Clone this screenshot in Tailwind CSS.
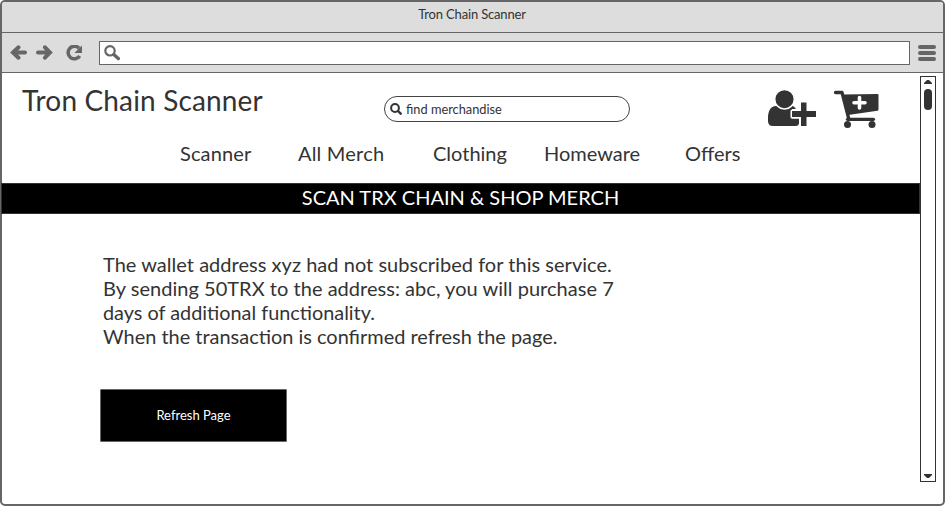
<!DOCTYPE html>
<html lang="en">
<head>
<meta charset="utf-8">
<title>Tron Chain Scanner</title>
<script src="https://cdn.jsdelivr.net/npm/@tailwindcss/browser@4"></script>
</head>
<body class="bg-white font-['Lato',sans-serif] text-[#333]">
<div class="flex h-[506px] w-[945px] flex-col rounded-[5px] border-2 border-[#666] bg-white">
  <div class="flex h-[31px] shrink-0 justify-center rounded-t-[3px] border-b border-[#666] bg-[#ddd] pr-px pt-[3px] text-[13px] leading-[18px] tracking-[-0.17px]">Tron Chain Scanner</div>
  <div class="flex h-10 shrink-0 items-start border-b border-[#666] bg-[#ddd] pt-2 text-[#666]">
    <svg class="ml-2 mt-1 h-4 w-[76px]" viewBox="0 0 76 16" fill="none" stroke="currentColor">
      <path d="M8.500 2.300 3 7.500 8.500 12.700M4 7.500H15" stroke-width="4" stroke-linecap="round"/>
      <path d="M35 2.300 40 7.500 35 12.700M39.500 7.500H28" stroke-width="4" stroke-linecap="round"/>
      <path d="M69.700 11A6.300 6.300 0 1 1 69 3.200" stroke-width="3.500"/>
      <path d="M72 .5V8H64.300Z" fill="currentColor" stroke="none"/>
    </svg>
    <div class="ml-[13px] h-6 w-[811px] border border-[#666] bg-white pl-1 pt-[3px]">
      <svg class="h-4 w-[17px]" viewBox="0 0 17 16" fill="none" stroke="currentColor"><circle cx="6" cy="5.800" r="4.700" stroke-width="2.200"/><path d="m9.800 9.600 4.500 4" stroke-width="3.400" stroke-linecap="round"/></svg>
    </div>
    <div class="ml-2 mt-1 flex w-[18px] flex-col gap-0.5"><i class="h-1 rounded-full bg-[#666]"></i><i class="h-1 rounded-full bg-[#666]"></i><i class="h-1 rounded-full bg-[#666]"></i></div>
  </div>
  <div class="flex min-h-0 flex-1">
    <main class="w-[918px] shrink-0">
      <div class="flex h-[61px] items-start">
        <h1 class="ml-5 mt-[9px] w-[362px] text-[28px] leading-9 tracking-[0.15px] whitespace-nowrap">Tron Chain Scanner</h1>
        <div class="mt-[23px] flex h-[26px] w-[246px] items-center rounded-full border border-[#444] pl-[5px] text-[12.8px] leading-4">
          <svg class="mr-1 h-3 w-3" viewBox="0 0 12 12" fill="none" stroke="currentColor"><circle cx="5" cy="5" r="3.900" stroke-width="2"/><path d="m8 8 2.700 2.700" stroke-width="2.400" stroke-linecap="round"/></svg>find merchandise</div>
        <svg class="ml-[136px] mt-4 h-10 w-[50px]" viewBox="766 89 50 40" fill="currentColor">
          <path d="M776 106C770.500 106 768 111.500 768 118V121Q768 126 773 126H795.500Q799 126 799 123V118.500H792V109H796Q794.500 106 791.500 105.500Q785 111.500 778 106Z"/>
          <circle cx="784.500" cy="99.200" r="9.800" stroke="white" stroke-width="1.500"/>
          <path d="M801 102.500H806.500V111H816V117H806.500V126H801V117H792V111H801Z" stroke="white" stroke-width="3" stroke-linejoin="round"/>
          <path d="M801 102.500H806.500V111H816V117H806.500V126H801V117H792V111H801Z"/>
        </svg>
        <svg class="ml-4 mt-4 h-10 w-12" viewBox="832 89 48 40" fill="none" stroke="currentColor">
          <path d="M835.500 92.500H842L848.800 119" stroke-width="3.300" stroke-linecap="round" stroke-linejoin="round"/>
          <path d="M843 94.500 877.500 94Q878.500 94 878.500 95V109.500Q878.500 110.500 877.500 110.800L848 115Z" fill="currentColor" stroke="none"/>
          <path d="M847.500 119.300H873.500" stroke-width="3.200" stroke-linecap="round"/>
          <circle cx="847.500" cy="124.500" r="3.500" fill="currentColor" stroke="none"/><circle cx="872" cy="124.500" r="3.500" fill="currentColor" stroke="none"/>
          <path d="M859.500 97.500V108M854 102.700H865" stroke="white" stroke-width="3.600" stroke-linecap="round"/>
        </svg>
      </div>
      <nav class="grid h-[49px] grid-cols-[118px_135px_111px_141px_auto] pl-[178px] pt-[7px] text-[20px] leading-6 whitespace-nowrap"><a class="tracking-[0.12px]">Scanner</a><a class="tracking-[0.2px]">All Merch</a><a>Clothing</a><a>Homeware</a><a>Offers</a></nav>
      <div class="relative -ml-px h-[31px] w-[919px] border border-[#333] bg-black text-center text-[20px] leading-[27px] text-white">SCAN TRX CHAIN &amp; SHOP MERCH</div>
      <p class="ml-[101px] mt-[38px] text-[20px] leading-6 whitespace-nowrap"><span class="block tracking-[0.03px]">The wallet address xyz had not subscribed for this service.</span><span class="block tracking-[0.03px]">By sending 50TRX to the address: abc, you will purchase 7</span><span class="block text-[19.85px]">days of additional functionality.</span><span class="block text-[19.95px]">When the transaction is confirmed refresh the page.</span></p>
      <button class="ml-[98px] mt-[41px] block h-[53px] w-[187px] rounded-[1px] border border-[#666] bg-black text-[13px] text-white">Refresh Page</button>
    </main>
    <div class="mt-[3px] flex h-[406px] w-4 flex-col items-center border border-[#333] pb-[3px] pt-[3px]">
      <svg class="h-1 w-2 shrink-0" viewBox="0 0 8 4" fill="currentColor"><path d="M0 4V3L3 0H5L8 3V4Z"/></svg>
      <div class="mt-[5px] h-[21px] w-2 rounded-full bg-[#333]"></div>
      <svg class="mt-auto h-1 w-2 shrink-0" viewBox="0 0 8 4" fill="currentColor"><path d="M0 0V1L3 4H5L8 1V0Z"/></svg>
    </div>
  </div>
</div>
</body>
</html>
